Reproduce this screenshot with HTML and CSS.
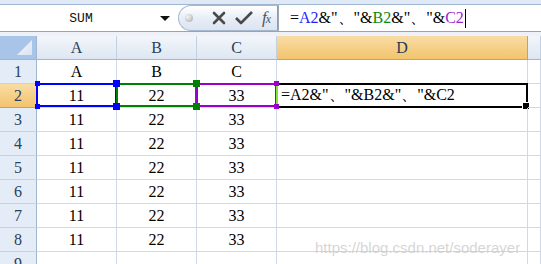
FILE: index.html
```html
<!DOCTYPE html>
<html>
<head>
<title>Formula bar</title>
<link rel="stylesheet" href="styles.css">
</head>
<body>

<div class="app">
  <div class="ribbon-edge"></div>

  <div class="formula-bar">
    <div class="name-box">
      <span class="name">SUM</span>
      <span class="drop"></span>
    </div>
    <div class="fx-group">
      <span class="dot"></span>
      <svg class="tool" width="14" height="14" viewBox="0 0 14 14">
        <path d="M2 2 L12 12 M12 2 L2 12" stroke="#4a4a4a" stroke-width="2.6" stroke-linecap="round"/>
      </svg>
      <svg class="tool" width="18" height="14" viewBox="0 0 18 14">
        <path d="M1 7 L6 12 L17 1" stroke="#4a4a4a" stroke-width="2.6" fill="none" stroke-linejoin="round"/>
      </svg>
      <span class="fx"><i>f</i><small>x</small></span>
    </div>
    <div class="formula-input">
      <span>=</span><span class="ref-a">A2</span><span>&amp;"、"&amp;</span><span class="ref-b">B2</span><span>&amp;"、"&amp;</span><span class="ref-c">C2</span><span class="caret"></span>
    </div>
  </div>

  <div class="gap"></div>

  <div class="sheet">
    <div class="corner"><span class="tri"></span></div>
    <div class="col-head">A</div>
    <div class="col-head">B</div>
    <div class="col-head">C</div>
    <div class="col-head active">D</div>
    <div class="col-head"></div>

    <div class="row-head">1</div>
    <div class="cell">A</div><div class="cell">B</div><div class="cell">C</div><div class="cell wide"></div><div class="cell"></div>

    <div class="row-head active">2</div>
    <div class="cell sel sel-a">11<span class="h tl"></span><span class="h tr"></span><span class="h bl"></span><span class="h br"></span></div>
    <div class="cell sel sel-b">22<span class="h tl"></span><span class="h tr"></span><span class="h bl"></span><span class="h br"></span></div>
    <div class="cell sel sel-c">33<span class="h tl"></span><span class="h tr"></span><span class="h bl"></span><span class="h br"></span></div>
    <div class="cell wide editing">=A2&amp;"、"&amp;B2&amp;"、"&amp;C2<span class="fill"></span></div>
    <div class="cell"></div>

    <div class="row-head">3</div>
    <div class="cell">11</div><div class="cell">22</div><div class="cell">33</div><div class="cell wide"></div><div class="cell"></div>
    <div class="row-head">4</div>
    <div class="cell">11</div><div class="cell">22</div><div class="cell">33</div><div class="cell wide"></div><div class="cell"></div>
    <div class="row-head">5</div>
    <div class="cell">11</div><div class="cell">22</div><div class="cell">33</div><div class="cell wide"></div><div class="cell"></div>
    <div class="row-head">6</div>
    <div class="cell">11</div><div class="cell">22</div><div class="cell">33</div><div class="cell wide"></div><div class="cell"></div>
    <div class="row-head">7</div>
    <div class="cell">11</div><div class="cell">22</div><div class="cell">33</div><div class="cell wide"></div><div class="cell"></div>
    <div class="row-head">8</div>
    <div class="cell">11</div><div class="cell">22</div><div class="cell">33</div><div class="cell wide"></div><div class="cell"></div>
    <div class="row-head">9</div>
    <div class="cell"></div><div class="cell"></div><div class="cell"></div><div class="cell wide"></div><div class="cell"></div>
  </div>

  <div class="watermark">https://blog.csdn.net/soderayer</div>
</div>

</body>
</html>
```

FILE: styles.css
```css
body {
  margin: 0;
  background: #fff;
  font-family: "Liberation Serif", serif;
  overflow: hidden;
}
.app {
  position: relative;
  width: 541px;
  height: 264px;
  overflow: hidden;
}
.ribbon-edge {
  height: 4px;
  background: #dfe9f5;
  border-bottom: 1px solid #9fb5d2;
}
.formula-bar {
  display: flex;
  height: 26px;
  background: #fff;
  border-bottom: 1px solid #8ea5c5;
}
.name-box {
  width: 178px;
  display: flex;
  align-items: center;
  position: relative;
}
.name {
  flex: 1;
  text-align: center;
  font-family: "Liberation Mono", monospace;
  font-size: 13px;
  padding-left: 2px;
  color: #111;
}
.drop {
  width: 0;
  height: 0;
  border-left: 5px solid transparent;
  border-right: 5px solid transparent;
  border-top: 5px solid #111;
  margin-right: 8px;
}
.fx-group {
  width: 100px;
  display: flex;
  align-items: center;
  gap: 9px;
  padding-left: 6px;
  box-sizing: border-box;
  border: 1px solid #a6b8cf;
  border-right-color: #8d9cb0;
  border-radius: 13px 0 0 13px;
  background: linear-gradient(#ffffff, #e8eef7 50%, #dbe4f0);
}
.dot {
  width: 8px;
  height: 8px;
  border-radius: 50%;
  background: radial-gradient(circle at 35% 35%, #f4f4f4, #a9a9a9);
  margin-right: 10px;
}
.tool {
  display: block;
}
.fx {
  font-family: "Liberation Serif", serif;
  font-size: 17px;
  color: #555;
  letter-spacing: -1px;
}
.fx small {
  font-size: 12px;
  font-style: italic;
}
.formula-input {
  flex: 1;
  display: flex;
  align-items: center;
  padding-left: 11px;
  font-size: 16px;
  color: #000;
  border-left: 1px solid #9aa5b5;
}
.ref-a { color: #1f1fff; }
.ref-b { color: #0a8a0a; }
.ref-c { color: #a020d0; }
.caret {
  width: 1px;
  height: 19px;
  background: #000;
  margin-left: 1px;
}
.gap {
  height: 4px;
  background: #eef2f8;
}

.sheet {
  display: grid;
  grid-template-columns: 37px 80px 80px 80px 251px 1fr;
  grid-auto-rows: 24px;
}
.sheet > div {
  box-sizing: border-box;
  display: flex;
  align-items: center;
  justify-content: center;
  font-size: 16px;
}
.corner {
  background: #a9c4e9;
  border-right: 1px solid #9eb6ce;
  border-bottom: 1px solid #9eb6ce;
  position: relative;
}
.tri {
  position: absolute;
  right: 4px;
  bottom: 4px;
  width: 15px;
  height: 15px;
  background: linear-gradient(135deg, #f4f7fb, #d9e3f1);
  clip-path: polygon(100% 0, 100% 100%, 0 100%);
}
.col-head {
  background: linear-gradient(#f3f6fb, #dde6f1);
  border-right: 1px solid #c2d0e2;
  border-bottom: 1px solid #9eb6ce;
  color: #27415f;
}
.col-head.active {
  background: linear-gradient(#f9dca6, #f2c46c);
  border-bottom: 1px solid #f29436;
  border-right: 1px solid #f29436;
  color: #1f3a57;
}
.row-head {
  background: #e4ecf7;
  border-right: 1px solid #9eb6ce;
  border-bottom: 1px solid #c5d2e3;
  color: #27415f;
}
.row-head.active {
  background: linear-gradient(#f9dca6, #f2c46c);
  border-right: 1px solid #f29436;
  border-bottom: 1px solid #f29436;
}
.cell {
  border-right: 1px solid #d0d7e5;
  border-bottom: 1px solid #d0d7e5;
  color: #000;
  position: relative;
}
.sel::after {
  content: "";
  position: absolute;
  left: -1px;
  top: -1px;
  right: -1px;
  bottom: 0;
  border: 2px solid;
  pointer-events: none;
}
.sel-a::after { border-color: #0000ff; }
.sel-b::after { border-color: #008000; }
.sel-c::after { border-color: #9900cc; }
.h {
  position: absolute;
  width: 5px;
  height: 5px;
  z-index: 2;
}
.sel-a .h { background: #0000ff; }
.sel-b .h { background: #008000; }
.sel-c .h { background: #9900cc; }
.h.tl { left: -2px; top: -3px; }
.h.tr { right: -3px; top: -3px; }
.h.bl { left: -2px; bottom: -2px; }
.h.br { right: -3px; bottom: -2px; }
.sel-b .h.tl, .sel-b .h.bl, .sel-c .h.tl, .sel-c .h.bl { display: none; }
.sel-a .h.tr, .sel-a .h.br, .sel-b .h.tr, .sel-b .h.br { width: 7px; height: 7px; right: -4px; }
.sel-a .h.tr, .sel-b .h.tr { top: -4px; }
.sel-a .h.br, .sel-b .h.br { bottom: -3px; }
.sheet > .editing {
  justify-content: flex-start;
  padding-left: 3px;
  border: 2px solid #000;
  border-left: 2px solid #7ee835;
  margin-top: -1px;
  margin-left: -1px;
  height: 25px;
}
.fill {
  position: absolute;
  right: -4px;
  bottom: -4px;
  width: 6px;
  height: 6px;
  background: #000;
  border: 1px solid #fff;
}
.watermark {
  position: absolute;
  left: 315px;
  top: 239px;
  font-family: "Liberation Sans", sans-serif;
  font-size: 15px;
  color: rgba(200, 200, 200, 0.75);
}
```
